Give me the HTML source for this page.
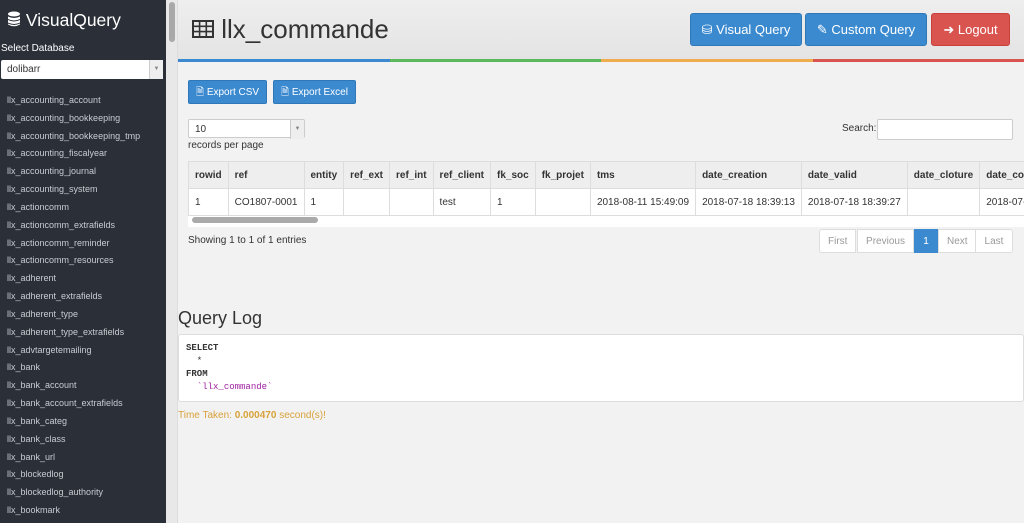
<!DOCTYPE html>
<html><head><style>
*{box-sizing:border-box;margin:0;padding:0}
body{width:1024px;height:523px;overflow:hidden;font-family:"Liberation Sans",sans-serif;background:#f2f2f2;position:relative}
#side{position:absolute;left:0;top:0;width:166px;height:523px;background:#2b2f38;color:#fff}
#sb{position:absolute;left:166px;top:0;width:12px;height:523px;background:#e8e8e8;border-right:1px solid #ddd}
#sb div{position:absolute;left:3px;top:2px;width:6px;height:40px;background:#a8a8a8;border-radius:3px}
.logo{position:absolute;left:7px;top:10px;font-size:17.5px}
.lbl{position:absolute;left:1px;top:43px;font-size:10px}
.sel{position:absolute;left:1px;top:60px;width:162px;height:19px;background:#fff;border-radius:2px;color:#333;font-size:10px;padding:4px 6px}
.sel i{position:absolute;right:0;top:0;width:14px;height:19px;border-left:1px solid #ccc;background:#eee;font-style:normal;font-size:6px;color:#888;text-align:center;line-height:19px}
ul{position:absolute;left:7px;top:95px;list-style:none;font-size:9px;color:#c8ccd2}
li{height:17.83px;line-height:11px}
#main{position:absolute;left:178px;top:0;right:0;bottom:0}
.hdr{position:absolute;left:0;top:0;width:846px;height:59px;background:linear-gradient(#eeeeee,#e4e4e4)}
.title{position:absolute;left:14px;top:14px;font-size:26px;color:#333}
.bar{position:absolute;top:59px;height:3px;width:211.5px}
.btn{position:absolute;color:#fff;font-size:13px;border-radius:3px;text-align:center;line-height:32px;height:33px;top:13px}
.b{background:#3b8ad0;border:1px solid #2f78b8}
.sbtn{position:absolute;top:80px;height:24px;line-height:23px;font-size:10px;color:#fff;background:#3b8ad0;border:1px solid #2f78b8;border-radius:2px;padding:0 7px}
table{position:absolute;left:10px;top:161px;border-collapse:collapse;font-size:10px;color:#333;background:#fff}
th,td{border:1px solid #ddd;padding:0 6px;text-align:left;white-space:nowrap}
th{height:27px;background:#eeeeee;font-weight:bold;color:#333}
td{height:27px}
.pg{position:absolute;top:229px;height:24px;font-size:10px;color:#999;border:1px solid #ddd;background:#fff;display:flex;align-items:center;justify-content:center;padding:0 8px}
pre{position:absolute;left:0;top:334px;width:846px;height:68px;background:#fff;border:1px solid #ddd;border-radius:3px;font-family:"Liberation Mono",monospace;font-size:9px;line-height:13px;padding:7px;color:#333}
</style></head><body>
<div id="side">
<div class="logo"><svg width="14" height="16" viewBox="0 0 14 16" style="vertical-align:-1px"><ellipse cx="7" cy="3" rx="6" ry="2.5" fill="#fff"/><path d="M1 5.5q6 3 12 0v2.5q-6 3-12 0zM1 9q6 3 12 0v2.5q-6 3-12 0zM1 12.5q6 3 12 0v1q-6 3.5-12 0z" fill="#fff"/></svg> VisualQuery</div>
<div class="lbl">Select Database</div>
<div class="sel">dolibarr<i>▼</i></div>
<ul>
<li>llx_accounting_account</li><li>llx_accounting_bookkeeping</li><li>llx_accounting_bookkeeping_tmp</li><li>llx_accounting_fiscalyear</li><li>llx_accounting_journal</li><li>llx_accounting_system</li><li>llx_actioncomm</li><li>llx_actioncomm_extrafields</li><li>llx_actioncomm_reminder</li><li>llx_actioncomm_resources</li><li>llx_adherent</li><li>llx_adherent_extrafields</li><li>llx_adherent_type</li><li>llx_adherent_type_extrafields</li><li>llx_advtargetemailing</li><li>llx_bank</li><li>llx_bank_account</li><li>llx_bank_account_extrafields</li><li>llx_bank_categ</li><li>llx_bank_class</li><li>llx_bank_url</li><li>llx_blockedlog</li><li>llx_blockedlog_authority</li><li>llx_bookmark</li>
</ul>
</div>
<div id="sb"><div></div></div>
<div id="main">
<div class="hdr"></div>
<div class="title"><svg width="22" height="18" viewBox="0 0 22 18" style="vertical-align:0"><rect x="1" y="1" width="20" height="16" fill="none" stroke="#333" stroke-width="2"/><path d="M1 6.3h20M1 11.6h20M7.6 1v16M14.3 1v16" stroke="#333" stroke-width="1.6"/></svg> llx_commande</div>
<div class="bar" style="left:0;background:#3b8ad0"></div>
<div class="bar" style="left:211.5px;background:#5cb85c"></div>
<div class="bar" style="left:423px;background:#f0ad4e"></div>
<div class="bar" style="left:634.5px;background:#d9534f"></div>
<div class="btn b" style="left:512px;width:112px">⛁ Visual Query</div>
<div class="btn b" style="left:627px;width:122px">✎ Custom Query</div>
<div class="btn" style="left:753px;width:79px;background:#d9534f;border:1px solid #c9403c">➜ Logout</div>
<div class="sbtn" style="left:10px">🗎 Export CSV</div>
<div class="sbtn" style="left:95px">🗎 Export Excel</div>
<div class="sel" style="left:10px;top:119px;width:117px;height:19px;border:1px solid #ccc">10<i>▼</i></div>
<div style="position:absolute;left:10px;top:140px;font-size:10px;color:#333">records per page</div>
<div style="position:absolute;left:664px;top:123px;font-size:10px;color:#333">Search:</div>
<div style="position:absolute;left:699px;top:119px;width:136px;height:21px;background:#fff;border:1px solid #ccc;border-radius:2px"></div>
<div style="position:absolute;left:10px;top:161px;width:836px;height:66px;overflow:hidden;background:#fff">
<table style="left:0;top:0">
<tr><th>rowid</th><th style="width:76px">ref</th><th>entity</th><th>ref_ext</th><th>ref_int</th><th>ref_client</th><th>fk_soc</th><th>fk_projet</th><th style="width:107px">tms</th><th style="width:107px">date_creation</th><th style="width:107px">date_valid</th><th>date_cloture</th><th>date_commande</th></tr>
<tr><td>1</td><td>CO1807-0001</td><td>1</td><td></td><td></td><td>test</td><td>1</td><td></td><td>2018-08-11 15:49:09</td><td>2018-07-18 18:39:13</td><td>2018-07-18 18:39:27</td><td></td><td>2018-07-18</td></tr>
</table>
<div style="position:absolute;left:4px;top:56px;width:126px;height:6px;background:#aaa;border-radius:3px"></div>
</div>
<div style="position:absolute;left:10px;top:235px;font-size:10px;color:#333">Showing 1 to 1 of 1 entries</div>
<div class="pg" style="left:641px;border-radius:3px 0 0 3px">First</div>
<div class="pg" style="left:679px;width:57px">Previous</div>
<div class="pg" style="left:736px;width:24px;background:#3b8ad0;color:#fff;border-color:#3b8ad0">1</div>
<div class="pg" style="left:760px">Next</div>
<div class="pg" style="left:797px;width:38px;border-radius:0 3px 3px 0">Last</div>
<div style="position:absolute;left:0;top:308px;font-size:18px;color:#333">Query Log</div>
<pre><b>SELECT</b>
  *
<b>FROM</b>
  <span style="color:#a020a0">`llx_commande`</span></pre>
<div style="position:absolute;left:0;top:410px;font-size:10px;color:#d8a23a">Time Taken: <b>0.000470</b> second(s)!</div>
</div>
</body></html>
